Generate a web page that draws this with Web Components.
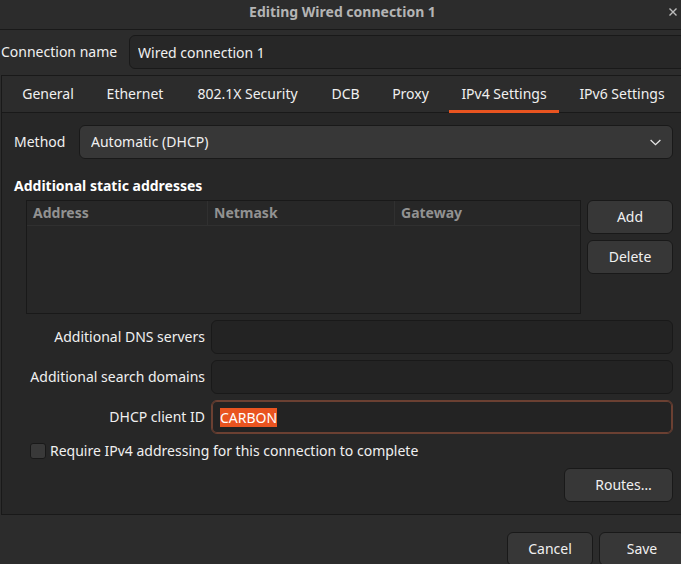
<!DOCTYPE html>
<html lang="en">
<head>
<meta charset="utf-8">
<title>Editing Wired connection 1</title>
<style>
  html, body { margin: 0; height: 100%; }
  body {
    background: #2c2c2c;
    color: #f0f0f0;
    font: 14px/20px "Noto Sans", "Open Sans", sans-serif;
    overflow: hidden;
    --line: #191919;
    --panel: #272727;
    --button: #373737;
    --accent: #e95420;
  }
</style>
</head>
<body>
<connection-editor></connection-editor>
<script>
  const define = (name, html, setup) => {
    const template = document.createElement('template');
    template.innerHTML = '<style>*{box-sizing:border-box}:host{box-sizing:border-box}</style>' + html;
    customElements.define(name, class extends HTMLElement {
      constructor() {
        super();
        this.attachShadow({ mode: 'open' }).append(template.content.cloneNode(true));
      }
      connectedCallback() {
        if (setup) setup(this, this.shadowRoot);
      }
    });
  };

  define('title-bar', `
    <style>
      :host { display: grid; grid-template-columns: 24px 1fr 24px; height: 30px; margin-right: -4px; border-bottom: 1px solid var(--line); }
      h1 { margin: 2px 0 0; font-size: 14px; line-height: 20px; font-weight: 700; text-align: center; color: #b4b4b4; }
      button { border: 0; background: none; padding: 0; width: 24px; height: 24px; display: grid; place-items: center; color: #bdbdbd; }
    </style>
    <span></span>
    <h1><slot></slot></h1>
    <button type="button" aria-label="Close">
      <svg width="8" height="8" viewBox="0 0 8 8" fill="none" stroke="currentColor" stroke-width="1.4"><path d="M.5 .5 7.5 7.5M7.5 .5 .5 7.5"/></svg>
    </button>`);

  define('push-button', `
    <style>
      :host { display: block; }
      button { width: 100%; height: 34px; padding: 0; border: 1px solid var(--line); border-radius: 6px;
        background: var(--button); color: inherit; font: inherit; }
      :host([inset]) button { padding-left: 10px; }
    </style>
    <button type="button"><slot></slot></button>`);

  define('text-field', `
    <style>
      :host { display: grid; grid-template-columns: var(--label-width) 1fr; align-items: center; column-gap: 6px; }
      label { text-align: var(--label-align, right); white-space: nowrap; }
      input { width: 100%; min-width: 0; height: 34px; padding: 0 8px; border: 1px solid var(--line); border-radius: 6px;
        background: var(--field, #232323); color: inherit; font: inherit; outline: 0; }
      input::selection { background: var(--accent); color: #fff; }
      :host([active]) input { border-color: #6b4032; box-shadow: inset 0 0 0 1px #6b4032; }
    </style>
    <label for="field"></label><input id="field" type="text" spellcheck="false">`,
    (host, root) => {
      const input = root.querySelector('input');
      root.querySelector('label').textContent = host.getAttribute('label');
      input.value = host.getAttribute('value') || '';
      if (host.hasAttribute('active')) {
        input.focus({ preventScroll: true });
        input.select();
      }
    });

  define('select-field', `
    <style>
      :host { display: grid; grid-template-columns: 59px 1fr; column-gap: 6px; align-items: center; }
      div { display: grid; align-items: center; }
      select, svg { grid-area: 1 / 1; }
      select { appearance: none; width: 100%; height: 34px; padding: 0 11px; border: 1px solid var(--line); border-radius: 6px;
        background: var(--button); color: inherit; font: inherit; }
      svg { justify-self: end; margin-right: 12px; pointer-events: none; }
    </style>
    <label for="choice">Method</label>
    <div>
      <select id="choice"><option>Automatic (DHCP)</option></select>
      <svg width="11" height="7" viewBox="0 0 11 7" fill="none" stroke="#e6e6e6" stroke-width="1.3"><path d="M.6 1 5.5 5.6 10.4 1"/></svg>
    </div>`);

  define('tab-strip', `
    <style>
      :host { display: flex; gap: 8px; height: 37px; padding-left: 8px; border-bottom: 1px solid var(--line); background: #2c2c2c; }
    </style>
    <slot></slot>`, host => host.setAttribute('role', 'tablist'));

  define('tab-item', `
    <style>
      :host { display: block; flex: none; width: var(--w); height: 37px; }
      button { width: 100%; height: 37px; padding: 2px 0 0; border: 0; border-bottom: 3px solid transparent;
        background: none; color: inherit; font: inherit; white-space: nowrap; }
      :host([selected]) button { border-color: var(--accent); }
    </style>
    <button type="button" role="tab"><slot></slot></button>`,
    (host, root) => root.querySelector('button').setAttribute('aria-selected', host.hasAttribute('selected')));

  define('address-table', `
    <style>
      :host { display: block; height: 114px; border: 1px solid var(--line); }
      table { width: 100%; border-collapse: separate; border-spacing: 0; table-layout: fixed; }
      th { height: 25px; padding: 0 6px; text-align: left; font-weight: 700; color: #929292;
        border-bottom: 1px solid #303030; border-right: 1px solid #303030; }
      th:first-child { width: 181px; }
      th:nth-child(2) { width: 187px; }
      th:last-child { border-right: 0; }
    </style>
    <table><thead><tr><th>Address</th><th>Netmask</th><th>Gateway</th></tr></thead><tbody></tbody></table>`);

  define('check-option', `
    <style>
      :host { display: block; }
      label { display: flex; align-items: center; gap: 4px; }
      input { appearance: none; flex: none; width: 16px; height: 16px; margin: 0; border: 1px solid var(--line); border-radius: 3px; background: #393939; }
    </style>
    <label><input type="checkbox"><span><slot></slot></span></label>`);

  define('connection-editor', `
    <style>
      :host { display: block; }
      .name { margin: 5px -5px 0 0; padding-left: 1px; --label-width: 122px; --label-align: left; --field: #272727; }
      .book { margin: 6px -5px 0 1px; border: 1px solid var(--line); background: var(--panel); }
      .page { padding: 12px; display: grid; }
      h2 { margin: 17px 0 4px; font-size: 14px; line-height: 20px; font-weight: 700; color: #fff; }
      .addresses { display: grid; grid-template-columns: 1fr 86px; gap: 6px; margin-left: 12px; }
      .stack, .fields { display: grid; gap: 6px; align-content: start; }
      .fields { margin: 6px 0 0 12px; --label-width: 179px; }
      check-option { margin: 7px 0 0 16px; }
      .routes { width: 109px; margin-top: 7px; justify-self: end; }
      .actions { display: grid; grid-template-columns: 86px 86px; gap: 6px; justify-content: end; margin: 17px -4px 0 0; }
    </style>
    <title-bar>Editing Wired connection 1</title-bar>
    <text-field class="name" label="Connection name" value="Wired connection 1"></text-field>
    <section class="book">
      <tab-strip>
        <tab-item style="--w:76px">General</tab-item>
        <tab-item style="--w:82px">Ethernet</tab-item>
        <tab-item style="--w:127px">802.1X Security</tab-item>
        <tab-item style="--w:53px">DCB</tab-item>
        <tab-item style="--w:61px">Proxy</tab-item>
        <tab-item style="--w:110px" selected>IPv4 Settings</tab-item>
        <tab-item style="--w:110px">IPv6 Settings</tab-item>
      </tab-strip>
      <div class="page">
        <select-field></select-field>
        <h2>Additional static addresses</h2>
        <div class="addresses">
          <address-table></address-table>
          <div class="stack">
            <push-button>Add</push-button>
            <push-button>Delete</push-button>
          </div>
        </div>
        <div class="fields">
          <text-field label="Additional DNS servers"></text-field>
          <text-field label="Additional search domains"></text-field>
          <text-field label="DHCP client ID" value="CARBON" active></text-field>
        </div>
        <check-option>Require IPv4 addressing for this connection to complete</check-option>
        <push-button class="routes" inset>Routes…</push-button>
      </div>
    </section>
    <div class="actions">
      <push-button>Cancel</push-button>
      <push-button>Save</push-button>
    </div>`);
</script>
</body>
</html>
